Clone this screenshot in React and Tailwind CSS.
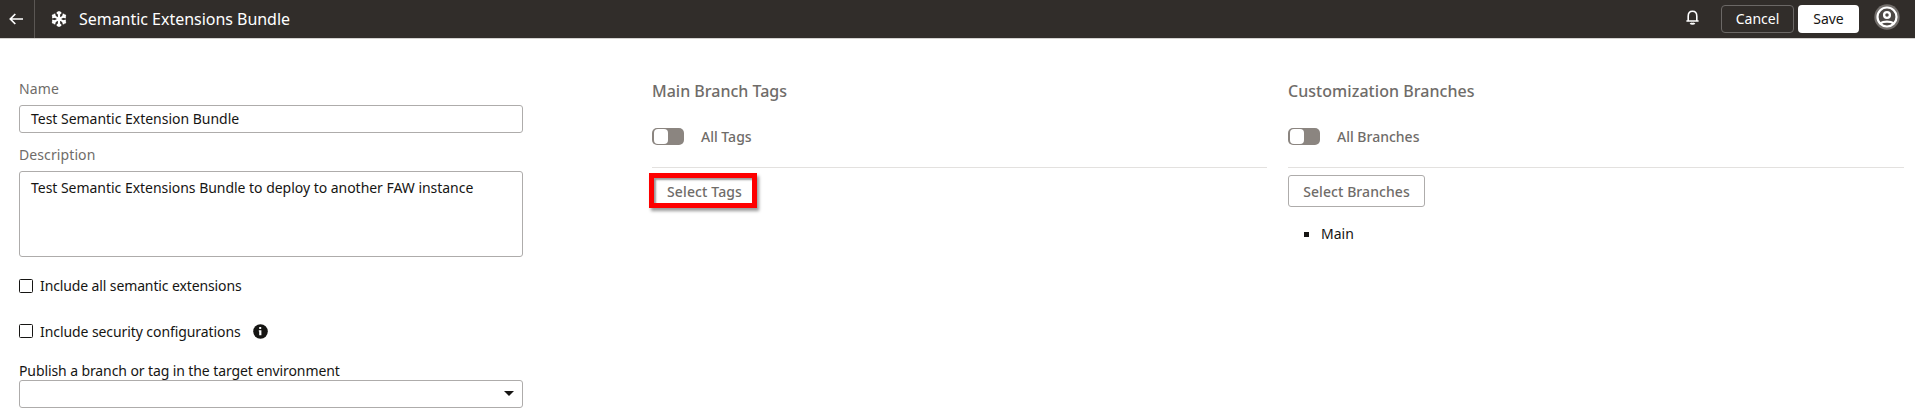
import React from "react";

function Toggle() {
  return (
    <div className="h-[17px] w-8 shrink-0 rounded-[5px] bg-[#8b8580] p-px">
      <div className="ml-px h-[15px] w-[14px] rounded-[4px] bg-white" />
    </div>
  );
}

function Check({ children }) {
  return (
    <label className="flex h-[20px] items-center">
      <span className="h-[14px] w-[14px] shrink-0 rounded-[1.5px] border border-[#161513] bg-white" />
      <span className="ml-[7px]">{children}</span>
    </label>
  );
}

function Snowflake() {
  return (
    <svg className="ml-4 shrink-0" width="16" height="16" viewBox="0 0 16 16" fill="none" stroke="currentColor" strokeWidth="2.2">
      <path d="M8 .2v15.6M1.2 4.1l13.6 7.8M1.2 11.9l13.6-7.8" />
      <g strokeWidth="1.9">
        <path d="M5.9 1.3L8 3.3l2.1-2" />
        <path d="M5.9 1.3L8 3.3l2.1-2" transform="rotate(60 8 8)" />
        <path d="M5.9 1.3L8 3.3l2.1-2" transform="rotate(120 8 8)" />
        <path d="M5.9 1.3L8 3.3l2.1-2" transform="rotate(180 8 8)" />
        <path d="M5.9 1.3L8 3.3l2.1-2" transform="rotate(240 8 8)" />
        <path d="M5.9 1.3L8 3.3l2.1-2" transform="rotate(300 8 8)" />
      </g>
    </svg>
  );
}

export default function App() {
  return (
    <div className="h-[418px] w-[1915px] overflow-hidden bg-white font-['Noto_Sans',sans-serif] text-[14px] leading-[20px] whitespace-nowrap text-[#161513]">
      <header className="flex h-[39px] items-center border-b border-[#d4d2d0] bg-[#312d2a] text-white">
        <div className="flex h-full w-[35px] items-center border-r border-[#5b5754] pl-[9px]">
          <svg width="14" height="12" viewBox="0 0 14 12" fill="none" stroke="currentColor" strokeWidth="1.7">
            <path d="M14 6H1.5M6.3 1L1.3 6l5 5" />
          </svg>
        </div>
        <Snowflake />
        <h1 className="ml-3 text-[16px] tracking-[-0.03px]">Semantic Extensions Bundle</h1>
        <svg className="mr-[2px] mb-[3px] ml-auto" width="13" height="15" viewBox="0 0 13 15" fill="none" stroke="currentColor" strokeWidth="1.6">
          <path d="M.4 11h12.2M2.2 11V6.2C2.2 3.3 3.9 1.3 6.5 1.3s4.3 2 4.3 4.9V11" />
          <path strokeWidth="2" d="M4.5 13c.6 1 3.4 1 4 0" />
        </svg>
        <button className="ml-5 h-7 w-[73px] rounded-[4px] border border-[#6b6866]">Cancel</button>
        <button className="ml-1 h-7 w-[61px] rounded-[4px] bg-white text-[#161513]">Save</button>
        <svg className="mr-[15px] mb-1 ml-[15px]" width="26" height="26" viewBox="0 0 26 26" fill="none">
          <circle cx="13" cy="13" r="12.7" fill="#74706d" />
          <circle cx="13" cy="13" r="9.5" fill="#4d4946" stroke="#fff" strokeWidth="2.2" />
          <circle cx="13" cy="11" r="2.9" stroke="#fff" strokeWidth="2.3" />
          <path d="M6.5 19.2c3-2.2 10-2.2 13 0" stroke="#fff" strokeWidth="2.3" />
        </svg>
      </header>
      <main className="flex">
        <section className="ml-[19px] flex w-[504px] flex-col pt-10">
          <label className="tracking-[0.1px] text-[#6f6c69]">Name</label>
          <div className="mt-[6px] flex h-7 items-center rounded-[3px] border border-[#aeacab] pl-[11px] tracking-[-0.02px]">Test Semantic Extension Bundle</div>
          <label className="mt-3 tracking-[0.1px] text-[#6f6c69]">Description</label>
          <div className="mt-[6px] h-[86px] rounded-[3px] border border-[#aeacab] pt-[6px] pl-[11px] tracking-[-0.03px]">Test Semantic Extensions Bundle to deploy to another FAW instance</div>
          <div className="mt-[19px] tracking-[-0.12px]">
            <Check>Include all semantic extensions</Check>
          </div>
          <div className="mt-[25px] flex items-center tracking-[-0.08px]">
            <Check>
              <span className="block pt-[2px]">Include security configurations</span>
            </Check>
            <svg className="ml-3" width="15" height="15" viewBox="0 0 15 15">
              <circle cx="7.5" cy="7.5" r="7.3" fill="#161513" />
              <path d="M6.2 3h2v2h-2zM5.8 6.3h2.6v5H6.2v-3.9h-.4z" fill="#fff" />
            </svg>
          </div>
          <label className="mt-5 -mb-px tracking-[-0.1px]">Publish a branch or tag in the target environment</label>
          <div className="flex h-7 items-center justify-end rounded-[3px] border border-[#aeacab] pr-2">
            <svg className="mb-px" width="10" height="5" viewBox="0 0 10 5">
              <path d="M0 0h10L5 5z" fill="#161513" />
            </svg>
          </div>
        </section>
        <section className="ml-[129px] w-[615px] pt-[42px] text-[#6f6c69]">
          <h2 className="text-[16px] font-medium">Main Branch Tags</h2>
          <div className="mt-[27px] flex h-[17px] items-center">
            <Toggle />
            <span className="ml-[17px] pt-px font-medium">All Tags</span>
          </div>
          <div className="mt-[22px] border-t border-[#e3e1df]" />
          <button className="mt-[5px] -ml-[3px] h-[35px] w-[108px] border-[5px] border-[#fe0000] pt-[3px] pl-[3px] font-medium tracking-[0.12px] shadow-[2px_3px_3px_rgba(0,0,0,0.4),inset_2px_2px_2px_rgba(0,0,0,0.4)]">Select Tags</button>
        </section>
        <section className="ml-[21px] w-[616px] pt-[42px] text-[#6f6c69]">
          <h2 className="text-[16px] font-medium tracking-[0.05px]">Customization Branches</h2>
          <div className="mt-[27px] flex h-[17px] items-center">
            <Toggle />
            <span className="ml-[17px] pt-px font-medium">All Branches</span>
          </div>
          <div className="mt-[22px] border-t border-[#e3e1df]" />
          <button className="mt-[7px] h-8 w-[137px] rounded-[3px] border border-[#aeacab] pt-[2px] font-medium tracking-[0.08px]">Select Branches</button>
          <div className="mt-[17px] flex items-center text-[#161513]">
            <span className="ml-4 h-[5px] w-[5px] bg-[#161513]" />
            <span className="ml-3">Main</span>
          </div>
        </section>
      </main>
    </div>
  );
}
